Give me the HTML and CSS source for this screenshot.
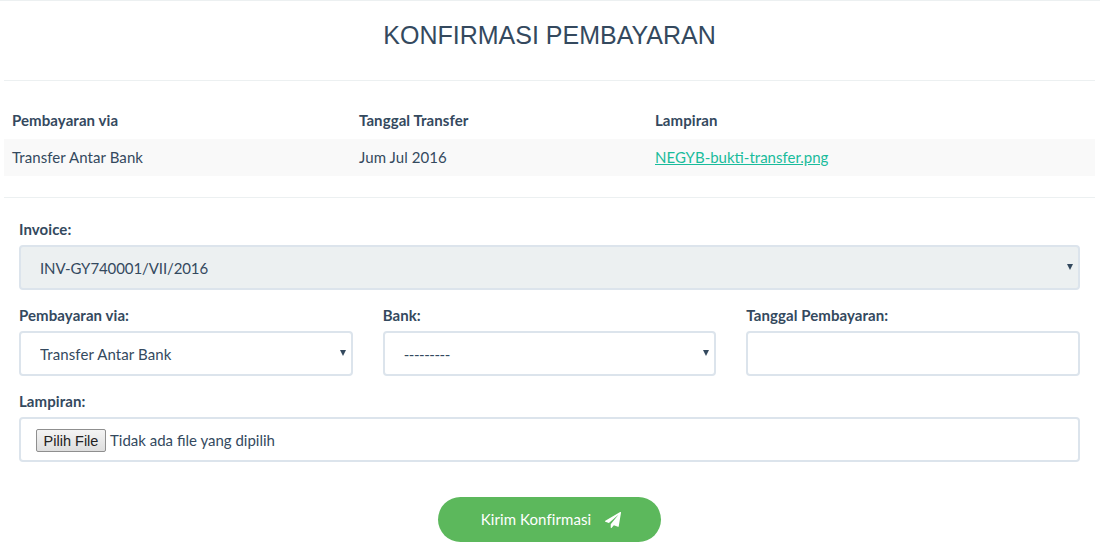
FILE: index.html
```html
<!DOCTYPE html>
<html lang="id">
<head>
    <meta charset="UTF-8">
    <title>Konfirmasi Pembayaran</title>
    <link rel="stylesheet" href="styles.css">
</head>
<body>
    <div class="wrap">
        <h1 class="title">KONFIRMASI PEMBAYARAN</h1>
        <hr class="line">

        <table class="info">
            <thead>
                <tr>
                    <th class="col-via">Pembayaran via</th>
                    <th class="col-date">Tanggal Transfer</th>
                    <th>Lampiran</th>
                </tr>
            </thead>
            <tbody>
                <tr>
                    <td>Transfer Antar Bank</td>
                    <td>Jum Jul 2016</td>
                    <td><a href="#">NEGYB-bukti-transfer.png</a></td>
                </tr>
            </tbody>
        </table>
        <hr class="line line-form">

        <form class="form">
            <div class="field">
                <label for="invoice">Invoice:</label>
                <div class="select-box">
                    <select id="invoice" class="control is-disabled">
                        <option>INV-GY740001/VII/2016</option>
                    </select>
                </div>
            </div>

            <div class="field-row">
                <div class="field">
                    <label for="via">Pembayaran via:</label>
                    <div class="select-box">
                        <select id="via" class="control">
                            <option>Transfer Antar Bank</option>
                        </select>
                    </div>
                </div>
                <div class="field">
                    <label for="bank">Bank:</label>
                    <div class="select-box">
                        <select id="bank" class="control is-empty">
                            <option>---------</option>
                        </select>
                    </div>
                </div>
                <div class="field">
                    <label for="tanggal">Tanggal Pembayaran:</label>
                    <input type="text" id="tanggal" class="control">
                </div>
            </div>

            <div class="field">
                <label>Lampiran:</label>
                <div class="control file-box">
                    <button type="button" class="file-btn">Pilih File</button>
                    <span>Tidak ada file yang dipilih</span>
                </div>
            </div>

            <div class="actions">
                <button type="button" class="send">
                    Kirim Konfirmasi
                    <svg class="send-icon" viewBox="0 0 1792 1792" aria-hidden="true"><path d="M1764 11q33 24 27 64l-256 1536q-5 29-32 45-14 8-31 8-11 0-24-5l-453-185-242 295q-18 23-49 23-13 0-22-4-19-7-30.5-23.5t-11.5-36.5v-349l864-1059-1069 925-395-162q-37-14-40-55-2-40 32-59l1664-960q15-9 32-9 20 0 36 11z"/></svg>
                </button>
            </div>
        </form>
    </div>
</body>
</html>
```

FILE: styles.css
```css
* {
    box-sizing: border-box;
}

body {
    margin: 0;
    background: #fff;
    color: #34495e;
    font-family: Lato, sans-serif;
    font-size: 15px;
    line-height: 1.5;
}

.wrap {
    border-top: 1px solid #ecf0f1;
    padding: 0 5px 0 4px;
}

.title {
    margin: 0;
    height: 79px;
    padding-top: 16px;
    text-align: center;
    font-family: "Liberation Sans", Arial, sans-serif;
    font-size: 25px;
    font-weight: 400;
    line-height: 36px;
}

.line {
    margin: 0;
    border: 0;
    border-top: 1px solid #ecf0f1;
}

/* Tabel info */
.info {
    width: 100%;
    margin-top: 21px;
    border-collapse: collapse;
    table-layout: fixed;
}

.info th,
.info td {
    padding: 0 8px;
    height: 37px;
    text-align: left;
    font-weight: 400;
    letter-spacing: 0.08px;
}

.info th {
    font-weight: 700;
}

.info tbody tr {
    background: #f9f9f9;
}

.col-via {
    width: 347px;
}

.col-date {
    width: 296px;
}

.info a {
    color: #1abc9c;
    letter-spacing: 0;
}

.line-form {
    margin-top: 21px;
}

/* Form */
.form {
    padding: 20px 15px 0;
}

.field {
    margin-bottom: 14px;
}

.field-row {
    display: grid;
    grid-template-columns: repeat(3, 1fr);
    gap: 30px;
}

label {
    display: block;
    height: 27px;
    font-weight: 700;
    line-height: 22px;
    letter-spacing: 0.08px;
}

.control {
    display: block;
    width: 100%;
    height: 45px;
    padding: 2px 19px 0;
    border: 2px solid #dce4ec;
    border-radius: 4px;
    background: #fff;
    color: #34495e;
    font: inherit;
    letter-spacing: 0.1px;
    outline: none;
    appearance: none;
}

.control.is-disabled {
    background: #ecf0f1;
    letter-spacing: -0.1px;
}

.control.is-empty {
    letter-spacing: -0.45px;
}

.select-box {
    position: relative;
}

.select-box::after {
    content: "";
    position: absolute;
    top: 19px;
    right: 7px;
    border-top: 6px solid #34495e;
    border-left: 3.5px solid transparent;
    border-right: 3.5px solid transparent;
}

.file-box {
    display: flex;
    align-items: center;
    gap: 4px;
    padding-left: 15px;
    letter-spacing: 0;
}

.file-btn {
    width: 70px;
    height: 23px;
    padding: 0;
    border: 1px solid #8f8f8f;
    border-radius: 2px;
    background: linear-gradient(#f4f4f4, #dedede);
    color: #222;
    font-family: "Liberation Sans", Arial, sans-serif;
    font-size: 14.5px;
}

.actions {
    margin-top: 35px;
    text-align: center;
}

.send {
    display: inline-flex;
    align-items: center;
    justify-content: center;
    gap: 14px;
    width: 223px;
    height: 45px;
    padding: 0 0 0 3px;
    border: 0;
    border-radius: 23px;
    background: #5cb85c;
    color: #fff;
    font: inherit;
    letter-spacing: 0.08px;
}

.send-icon {
    width: 16px;
    height: 16px;
    fill: #fff;
}
```
